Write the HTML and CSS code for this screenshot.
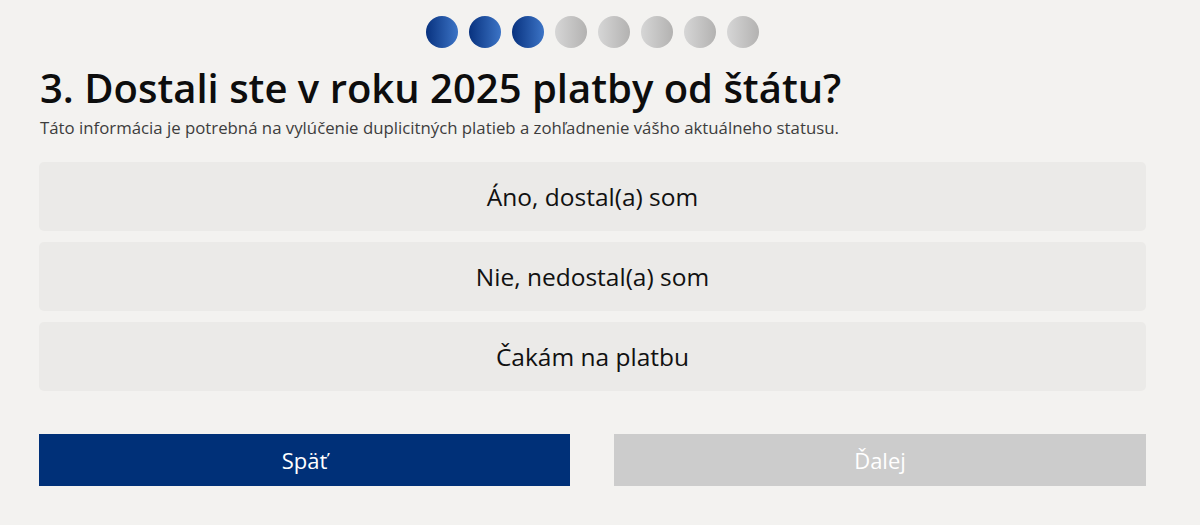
FILE: index.html
```html
<!DOCTYPE html>
<html lang="sk">
<head>
<meta charset="utf-8">
<title>Dotazník</title>
<link rel="stylesheet" href="styles.css">
</head>
<body>
<main class="page">
  <div class="progress">
    <span class="dot dot-done"></span>
    <span class="dot dot-done"></span>
    <span class="dot dot-done"></span>
    <span class="dot"></span>
    <span class="dot"></span>
    <span class="dot"></span>
    <span class="dot"></span>
    <span class="dot"></span>
  </div>
  <h1 class="question">3. Dostali ste v roku 2025 platby od štátu?</h1>
  <p class="hint">Táto informácia je potrebná na vylúčenie duplicitných platieb a zohľadnenie vášho aktuálneho statusu.</p>
  <div class="options">
    <button class="option">Áno, dostal(a) som</button>
    <button class="option">Nie, nedostal(a) som</button>
    <button class="option">Čakám na platbu</button>
  </div>
  <div class="nav">
    <button class="btn btn-back">Späť</button>
    <button class="btn btn-next" disabled>Ďalej</button>
  </div>
</main>
</body>
</html>
```
FILE: styles.css
```css
html, body {
  margin: 0;
  padding: 0;
  background: #f3f2f0;
}
body {
  font-family: "Open Sans", "Noto Sans", sans-serif;
  color: #111;
}
.page {
  width: 1107px;
  margin-left: 39px;
  padding-top: 16px;
}
.progress {
  display: flex;
  justify-content: center;
  gap: 11px;
}
.dot {
  width: 32px;
  height: 32px;
  border-radius: 50%;
  background: linear-gradient(to right, #d6d6d6, #b3b2b1);
}
.dot-done {
  background: linear-gradient(to right, #08327f, #3c74c6);
}
.question {
  margin: 16px 0 0 1px;
  font-size: 40px;
  font-weight: 600;
  line-height: 48px;
  color: #0d0d0d;
}
.hint {
  margin: 3.5px 0 0 1px;
  font-size: 16.8px;
  line-height: 24px;
  color: #3d3d3d;
}
.options {
  margin-top: 22.5px;
  display: flex;
  flex-direction: column;
  gap: 11px;
}
.option {
  height: 69px;
  border: none;
  border-radius: 5px;
  background: #ebeae8;
  font-family: inherit;
  font-size: 24.5px;
  color: #111;
  padding: 0;
}
.nav {
  margin-top: 43px;
  display: flex;
  justify-content: space-between;
}
.btn {
  width: 531px;
  height: 52px;
  border: none;
  font-family: inherit;
  font-size: 22px;
  color: #fff;
  padding: 0;
}
.btn-back {
  background: #003078;
}
.btn-next {
  width: 532px;
  background: #cccccc;
}
```
